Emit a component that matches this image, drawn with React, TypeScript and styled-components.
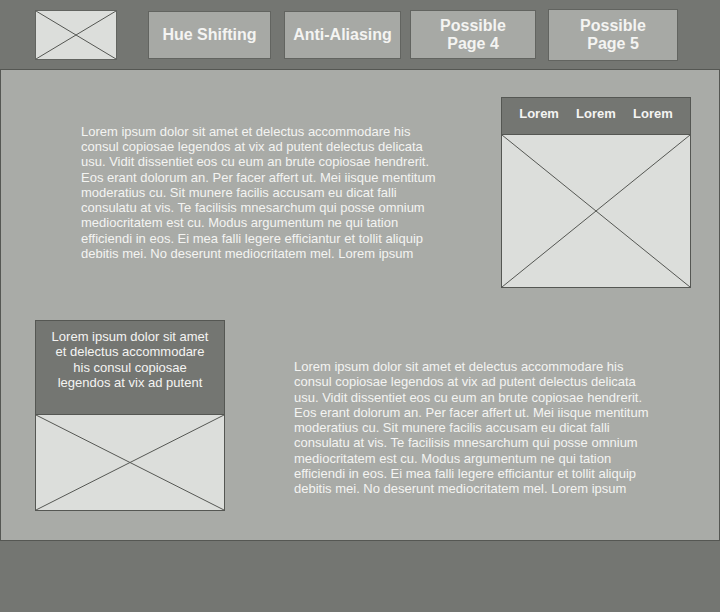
import React from "react";
import styled, { createGlobalStyle } from "styled-components";

const lorem =
  "Lorem ipsum dolor sit amet et delectus accommodare his consul copiosae legendos at vix ad putent delectus delicata usu. Vidit dissentiet eos cu eum an brute copiosae hendrerit. Eos erant dolorum an. Per facer affert ut. Mei iisque mentitum moderatius cu. Sit munere facilis accusam eu dicat falli consulatu at vis. Te facilisis mnesarchum qui posse omnium mediocritatem est cu. Modus argumentum ne qui tation efficiendi in eos. Ei mea falli legere efficiantur et tollit aliquip debitis mei. No deserunt mediocritatem mel. Lorem ipsum";

const navItems = [
  { label: "Hue Shifting", width: 123, height: 48, gap: 31 },
  { label: "Anti-Aliasing", width: 117, height: 48, gap: 13 },
  { label: "Possible Page 4", width: 126, height: 49, gap: 9, narrow: true },
  { label: "Possible Page 5", width: 130, height: 52, gap: 12, narrow: true },
];

function Placeholder() {
  return (
    <CrossSvg viewBox="0 0 100 100" preserveAspectRatio="none">
      <line x1="0" y1="0" x2="100" y2="100" vectorEffect="non-scaling-stroke" />
      <line x1="100" y1="0" x2="0" y2="100" vectorEffect="non-scaling-stroke" />
    </CrossSvg>
  );
}

export default function App() {
  return (
    <Page>
      <GlobalStyle />
      <Header>
        <Logo>
          <Placeholder />
        </Logo>
        {navItems.map((item) => (
          <NavButton
            key={item.label}
            $w={item.width}
            $h={item.height}
            $gap={item.gap}
            $narrow={item.narrow}
          >
            {item.label}
          </NavButton>
        ))}
      </Header>
      <Main>
        <TopRow>
          <Paragraph $w={358}>{lorem}</Paragraph>
          <Card>
            <TabBar>
              <Tab>Lorem</Tab>
              <Tab>Lorem</Tab>
              <Tab>Lorem</Tab>
            </TabBar>
            <ImageBox $h={152}>
              <Placeholder />
            </ImageBox>
          </Card>
        </TopRow>
        <BottomRow>
          <Card>
            <Caption>
              Lorem ipsum dolor sit amet et delectus accommodare his consul copiosae legendos at vix ad putent
            </Caption>
            <ImageBox $h={95}>
              <Placeholder />
            </ImageBox>
          </Card>
          <Paragraph $w={360}>{lorem}</Paragraph>
        </BottomRow>
      </Main>
      <Footer />
    </Page>
  );
}

const GlobalStyle = createGlobalStyle`
  body {
    margin: 0;
    background: #747672;
    font-family: "Liberation Sans", Arial, sans-serif;
  }
`;

const Page = styled.div`
  width: 720px;
  height: 612px;
  display: flex;
  flex-direction: column;
  background: #747672;
`;

const Header = styled.header`
  height: 69px;
  display: flex;
  align-items: center;
  padding-left: 35px;
  border-bottom: 1px solid #555753;
  box-sizing: content-box;
`;

const Logo = styled.div`
  width: 80px;
  height: 48px;
  background: #dcdedb;
  border: 1px solid #626460;
`;

const NavButton = styled.div<{ $w: number; $h: number; $gap: number; $narrow?: boolean }>`
  width: ${(p) => p.$w}px;
  height: ${(p) => p.$h}px;
  margin-left: ${(p) => p.$gap}px;
  box-sizing: border-box;
  display: flex;
  align-items: center;
  justify-content: center;
  text-align: center;
  padding: 0 ${(p) => (p.$narrow ? 28 : 4)}px;
  background: #a7a9a5;
  border: 1px solid #626460;
  color: #f4f4f2;
  font-weight: bold;
  font-size: 16px;
  line-height: 18px;
`;

const Main = styled.main`
  height: 470px;
  background: #a9aba7;
  border-left: 1px solid #555753;
  border-right: 1px solid #555753;
  border-bottom: 1px solid #555753;
  display: flex;
  flex-direction: column;
`;

const TopRow = styled.div`
  display: flex;
  align-items: center;
  justify-content: space-between;
  padding: 27px 28px 0 80px;
`;

const BottomRow = styled.div`
  display: flex;
  align-items: flex-start;
  padding: 32px 0 0 34px;
  gap: 69px;
`;

const Paragraph = styled.p<{ $w: number }>`
  width: ${(p) => p.$w}px;
  margin: 0;
  color: #f4f4f2;
  font-size: 13px;
  line-height: 15.3px;

  ${BottomRow} & {
    margin-top: 39px;
  }
`;

const Card = styled.div`
  width: 190px;
  box-sizing: border-box;
  border: 1px solid #555753;
  display: flex;
  flex-direction: column;
`;

const TabBar = styled.div`
  height: 37px;
  box-sizing: border-box;
  padding-bottom: 6px;
  background: #747672;
  border-bottom: 1px solid #555753;
  display: flex;
  align-items: center;
  justify-content: space-evenly;
`;

const Tab = styled.span`
  color: #f4f4f2;
  font-weight: bold;
  font-size: 13px;
`;

const Caption = styled.div`
  height: 94px;
  box-sizing: border-box;
  padding: 8px 14px 0;
  background: #747672;
  border-bottom: 1px solid #555753;
  color: #f4f4f2;
  font-size: 13px;
  line-height: 15.3px;
  text-align: center;
`;

const ImageBox = styled.div<{ $h: number }>`
  height: ${(p) => p.$h}px;
  background: #dcdedb;
`;

const CrossSvg = styled.svg`
  display: block;
  width: 100%;
  height: 100%;
  stroke: #555753;
  stroke-width: 1;
`;

const Footer = styled.footer`
  flex: 1;
  background: #747672;
`;
